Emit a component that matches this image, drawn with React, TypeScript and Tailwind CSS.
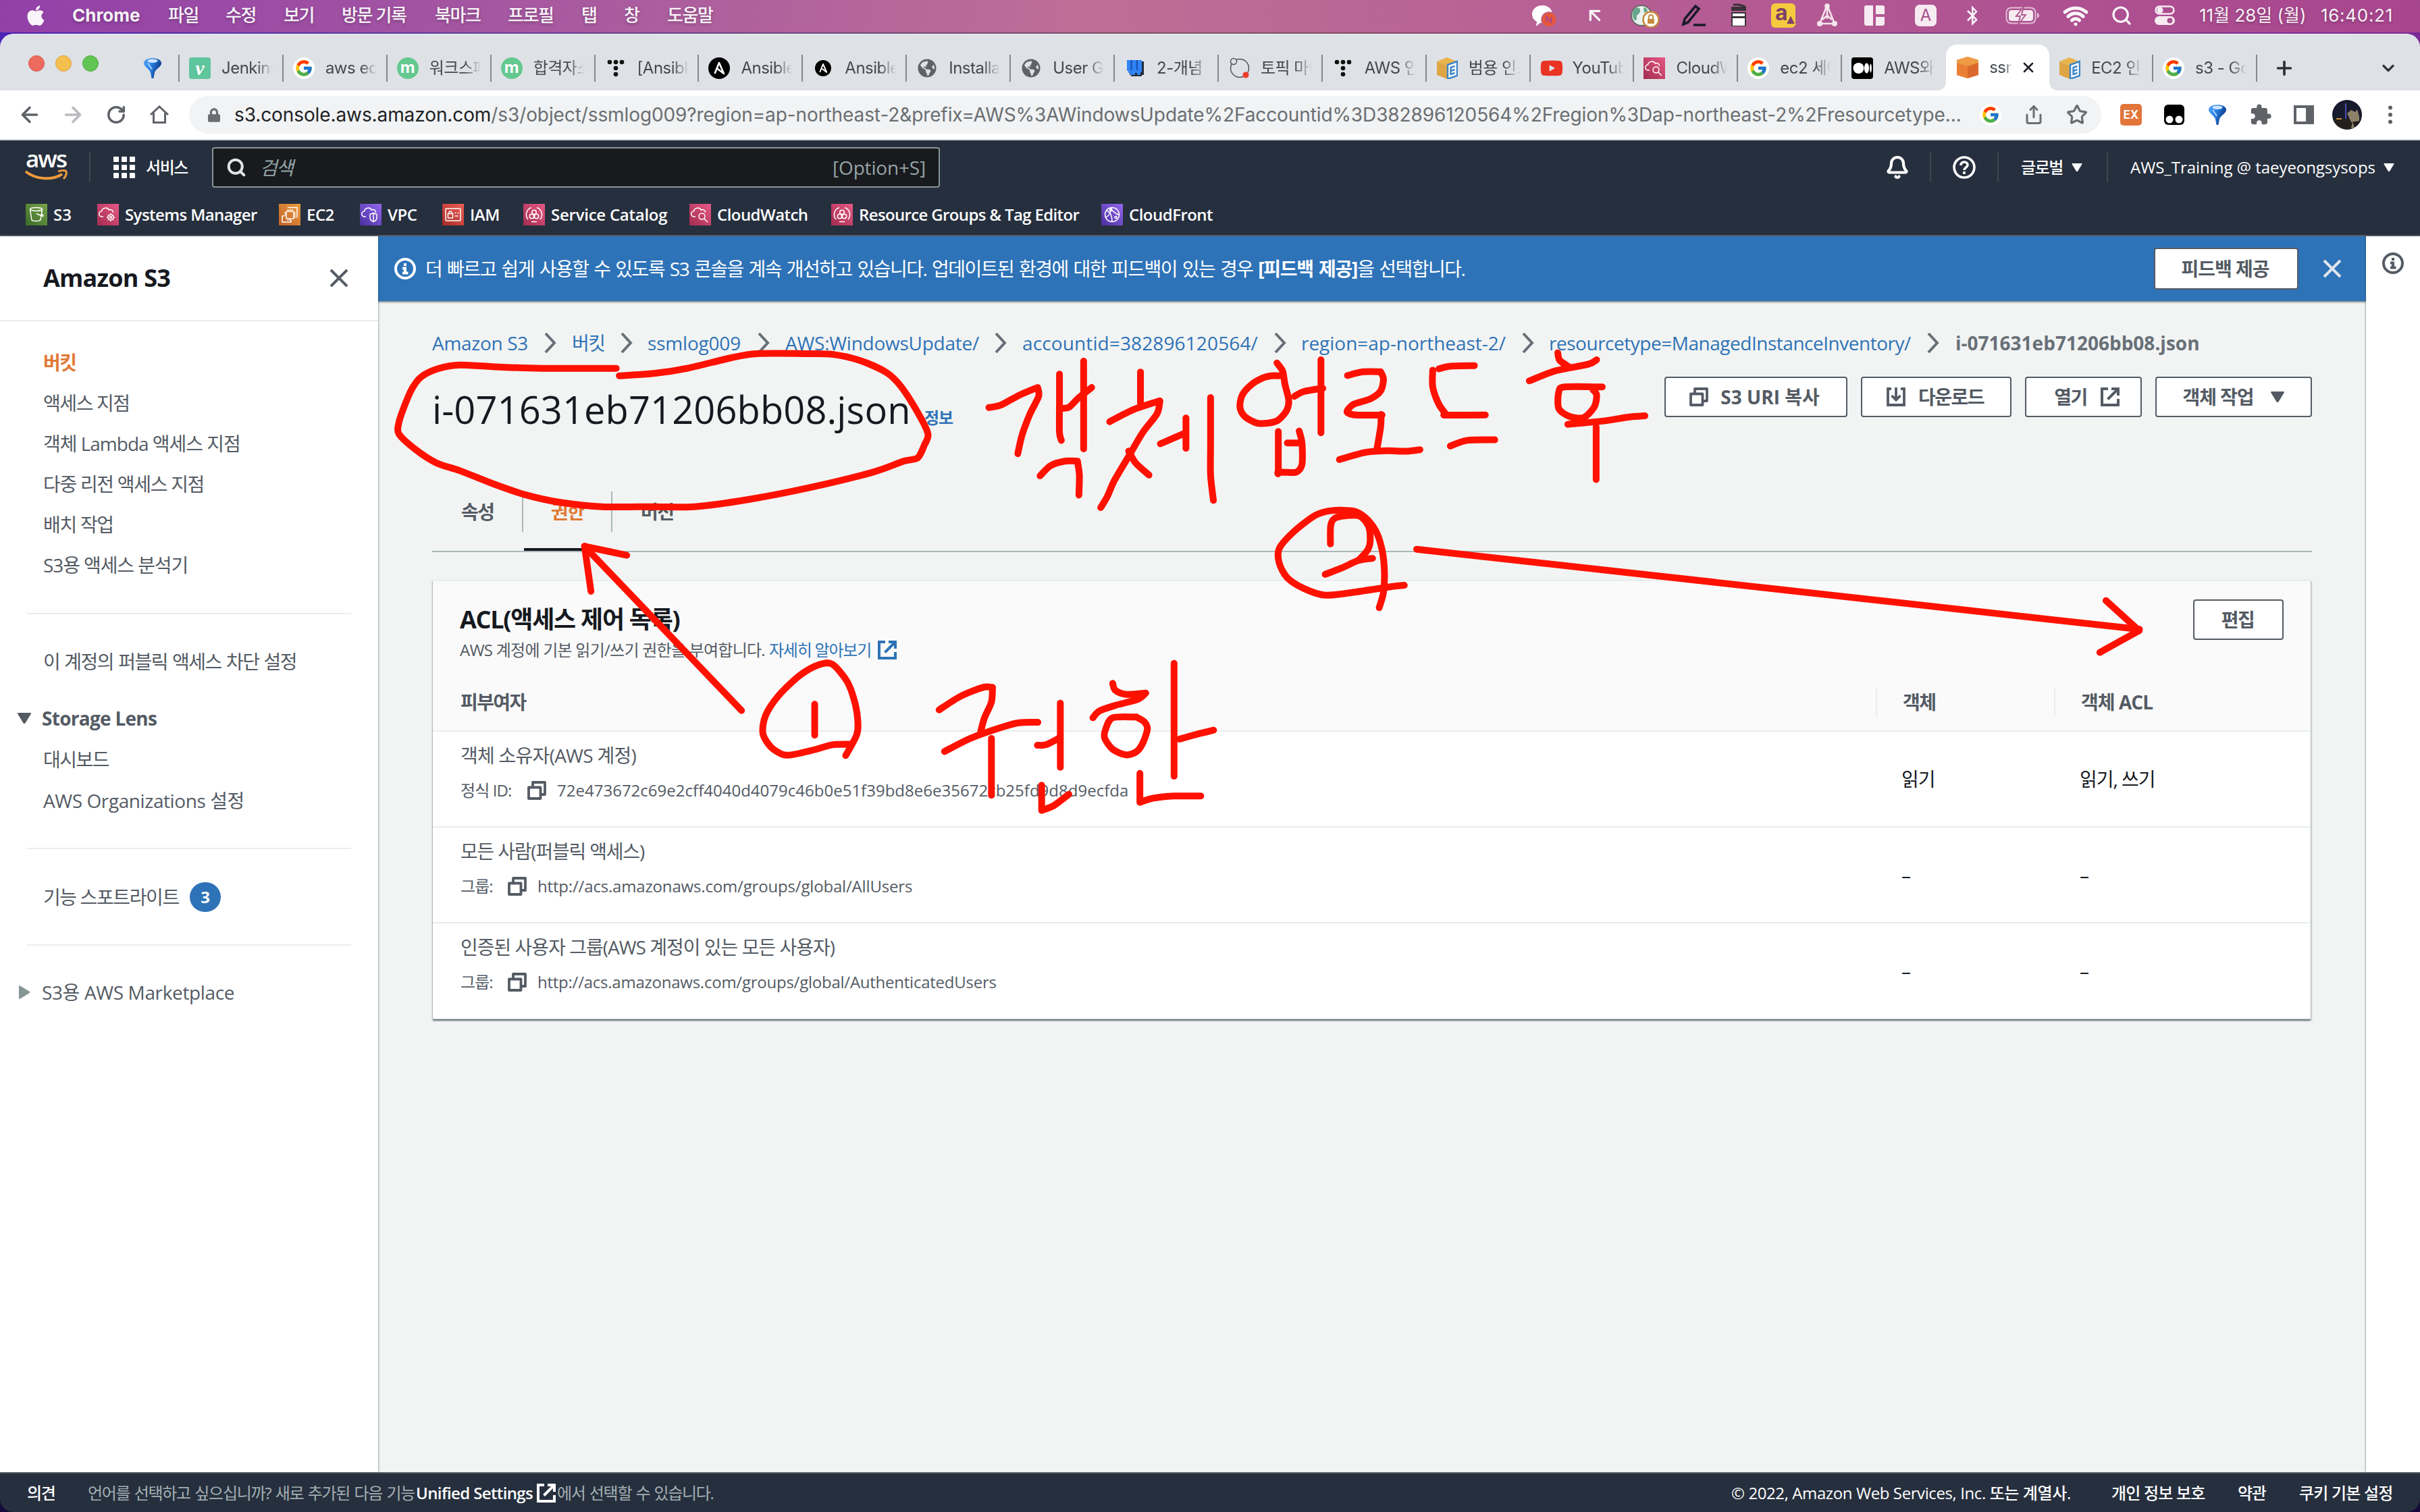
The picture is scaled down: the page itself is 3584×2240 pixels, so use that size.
import type { ReactNode } from 'react'
import { FaApple, FaGlobeAmericas, FaYoutube, FaLock, FaBluetoothB } from 'react-icons/fa'
import { FcGoogle } from 'react-icons/fc'
import { MdExtension } from 'react-icons/md'
import { ArrowLeft, ArrowRight, RotateCw, Share, Star, Search, Wifi, Bell, Plus, X, ChevronDown, ArrowUpLeft } from 'lucide-react'

/* ---------- small icons ---------- */

const Copy = ({ className = '' }: { className?: string }) => (
  <svg viewBox="0 0 28 28" className={`size-7 shrink-0 ${className}`} fill="none" stroke="currentColor" strokeWidth="3.8" strokeLinejoin="round">
    <path d="M2 9.5h17.5V26H2z" />
    <path d="M8 9.5V2h18v18h-6" />
  </svg>
)
const External = ({ className = '' }: { className?: string }) => (
  <svg viewBox="0 0 28 28" className={`size-7 shrink-0 ${className}`} fill="none" stroke="currentColor" strokeWidth="4">
    <path d="M11 2H2v24h24v-9" />
    <path d="M16 2h10v10M25 3 10.500 17.500" />
  </svg>
)
const Download = () => (
  <svg viewBox="0 0 28 28" className="size-7 shrink-0" fill="none" stroke="currentColor" strokeWidth="3.8">
    <path d="M7 2H2v24h24V2h-5" />
    <path d="M14 0v18M7.500 12l6.500 6.500L20.500 12" />
  </svg>
)
const Info = ({ className = '' }: { className?: string }) => (
  <svg viewBox="0 0 32 32" className={`size-8 shrink-0 ${className}`} fill="none" stroke="currentColor" strokeWidth="4">
    <circle cx="16" cy="16" r="14" />
    <path d="M16 8v4M12 15.500h4V22M12 22.500h8.500" />
  </svg>
)
const Tri = ({ className = '' }: { className?: string }) => (
  <svg viewBox="0 0 20 16" className={`shrink-0 ${className}`} fill="currentColor" stroke="currentColor" strokeWidth="2" strokeLinejoin="round">
    <path d="M1 1h18L10.500 15h-1z" />
  </svg>
)
const Cross = ({ className = '' }: { className?: string }) => (
  <svg viewBox="0 0 28 28" className={`size-7 shrink-0 ${className}`} fill="none" stroke="currentColor" strokeWidth="4">
    <path d="M2 2l24 24M26 2 2 26" />
  </svg>
)
const Chevron = () => (
  <svg viewBox="0 0 18 30" className="h-[30px] w-[18px] shrink-0" fill="none" stroke="#687078" strokeWidth="4">
    <path d="M2 1l13 14L2 29" />
  </svg>
)
const Pin = ({ className = '' }: { className?: string }) => (
  <svg viewBox="0 0 30 32" className={className}>
    <defs>
      <linearGradient id="pin" x1="0" y1="0" x2="1" y2=".4">
        <stop offset="0" stopColor="#5aa5f5" />
        <stop offset=".45" stopColor="#2d86ea" />
        <stop offset="1" stopColor="#0a3a86" />
      </linearGradient>
    </defs>
    <path d="M1 8C1-2.500 29-2.500 29 8c0 5-7 8-10.500 14L16.500 32h-3l-2-10C8 16 1 13 1 8z" fill="url(#pin)" />
    <ellipse cx="15" cy="4.500" rx="8" ry="3" fill="#cfe6ff" />
    <path d="M8 8c1 4 4 6 6 10" stroke="#a9d2fb" strokeWidth="2" fill="none" />
  </svg>
)

/* ---------- tab favicons ---------- */

const GoogleFav = () => (
  <span className="grid size-8 place-items-center rounded-full bg-white">
    <FcGoogle className="size-7" />
  </span>
)
const AnsibleFav = ({ small = false }: { small?: boolean }) => (
  <svg viewBox="0 0 32 32" className={small ? 'size-6' : 'size-8'}>
    <circle cx="16" cy="16" r="16" fill="#000" />
    <path d="M9.500 24 16 8l7 16-10.500-8" fill="none" stroke="#fff" strokeWidth="2.600" strokeLinejoin="round" />
  </svg>
)
const DotsT = () => (
  <svg viewBox="0 0 32 32" className="size-8" fill="#111">
    {[[7, 7], [16, 7], [25, 7], [16, 16], [16, 25]].map(([x, y]) => (
      <circle key={`${x}-${y}`} cx={x} cy={y} r="3.300" />
    ))}
  </svg>
)
const MFav = () => <span className="grid size-8 place-items-center rounded-full bg-[#63c98f] pb-[3px] font-['Inter'] text-[24px] leading-none font-bold text-white">m</span>
const CubeDoc = () => (
  <svg viewBox="0 0 32 32" className="size-8">
    <path d="M16 0 30 6 16 12 1 6z" fill="#e9b44c" />
    <path d="M1 6l15 6v20L1 26z" fill="#dfa545" />
    <path d="M17 11 31 6v21l-14 5z" fill="#fff" stroke="#3d86c6" strokeWidth="2.500" />
    <path d="M20.500 15.500l7-2.500M20.500 20.500l7-2.500M20.500 25.500l7-2.500M21.500 15v11" stroke="#3d86c6" strokeWidth="2.400" />
  </svg>
)
const BlueBook = () => (
  <svg viewBox="0 0 32 32" className="size-8">
    <path d="M8 6h21v20h-3v2H10v-2H8z" fill="#222b38" />
    <path d="M4 4h22v18h-2v4h-5v-3h-3v3H9v-3H6v-3H4z" fill="#3184f5" />
    <path d="M10.500 4v15M19 4v15" stroke="#1b55b8" strokeWidth="2.500" />
  </svg>
)
const TopicFav = () => (
  <svg viewBox="0 0 32 32" className="size-8" fill="none" stroke="#555" strokeWidth="1.500">
    <circle cx="17" cy="16" r="13.500" />
    <circle cx="8" cy="6" r="4.500" fill="#dee1e6" />
    <circle cx="26" cy="26" r="4.500" fill="#ee3b2c" stroke="none" />
  </svg>
)
const MediumFav = () => (
  <svg viewBox="0 0 32 32" className="size-8">
    <rect width="32" height="32" rx="4" fill="#000" />
    <circle cx="10.500" cy="16" r="8" fill="#fff" />
    <ellipse cx="22.500" cy="16" rx="3.600" ry="7.500" fill="#fff" />
    <ellipse cx="28.500" cy="16" rx="1.400" ry="6.500" fill="#fff" />
  </svg>
)
const OrangeCube = () => (
  <svg viewBox="0 0 32 32" className="size-8">
    <path d="M16 0 32 5v22l-16 5L0 27V5z" fill="#e0702f" />
    <path d="M16 0 32 5v10l-16 5L0 15V5z" fill="#f09a45" />
    <path d="M16 14v18L0 27V9z" fill="#e98034" />
    <path d="M16 14v18l16-5V9z" fill="#da6a2c" />
  </svg>
)

/* ---------- AWS service tiles ---------- */

const CLOUD = 'M9 19H7a4 4 0 0 1-.5-8 6 6 0 0 1 11-2 4 4 0 0 1 6 4'
const GLYPHS: Record<string, ReactNode> = {
  s3: <><ellipse cx="15.500" cy="8" rx="9" ry="2.500" /><path d="M6.500 8l2.500 16c2 2 11 2 13 0l2.500-16M16 14.500l8 3.500c3 1 3-1-1-3" /></>,
  ssm: <><path d={CLOUD} /><circle cx="20" cy="20" r="4" /><circle cx="20" cy="20" r="1.500" /><path d="M20 14v2M20 24v2M14 20h2M24 20h2M16 16l1.500 1.500M22.500 22.500 24 24M24 16l-1.500 1.500M17.500 22.500 16 24" /></>,
  ec2: <><rect x="11" y="11" width="11" height="11" rx="1" /><path d="M13.500 8v3M16.500 8v3M19.500 8v3M13.500 22v3M16.500 22v3M8 13.500h3M8 16.500h3M22 13.500h3M22 16.500h3M22 19.500h3M13 5.500h14v15M8 18H5v9h13v-3" /></>,
  vpc: <><path d={CLOUD} /><path d="M20 13.500l5 2v5c0 3-2.500 5-5 6-2.500-1-5-3-5-6v-5zM20 14v12" /></>,
  iam: <><rect x="5" y="7" width="22" height="18" rx="1" /><rect x="8.500" y="14.500" width="7" height="6.500" /><path d="M10 14.500V13a2 2 0 0 1 4 0v1.500M18.500 13.500h2M22.500 13.500h2M18.500 18h5" /></>,
  catalog: <><path d="M12 5.500A11 11 0 0 0 7 23M20 5.500A11 11 0 0 1 25 23M12 26.500h8" /><circle cx="16" cy="12.500" r="3.200" /><circle cx="12.500" cy="18.500" r="3.200" /><circle cx="19.500" cy="18.500" r="3.200" /></>,
  watch: <><path d={CLOUD} /><circle cx="18.500" cy="18.500" r="4.500" /><path d="M22 22l5 5" /></>,
  front: <><circle cx="16" cy="16" r="10.500" /><path d="M8 10c5 2 8 6 8 16M13 6c4 5 9 9 13 10M7 20c4-2 7-7 8-14" /><circle cx="14" cy="9" r="1.600" /><circle cx="21.500" cy="20" r="1.600" /></>,
}
const Glyph = ({ name }: { name: string }) => (
  <svg viewBox="0 0 32 32" className="size-8" fill="none" stroke="#fff" strokeWidth="1.500">{GLYPHS[name]}</svg>
)
const SERVICES = [
  { name: 'S3', icon: 's3', tile: 'bg-linear-to-tr from-[#3b6b27] to-[#77a548]', width: 'w-[106px]', track: '' },
  { name: 'Systems Manager', icon: 'ssm', tile: 'bg-linear-to-tr from-[#a32b50] to-[#e65a86]', width: 'w-[269px]', track: 'tracking-[-0.58px]' },
  { name: 'EC2', icon: 'ec2', tile: 'bg-linear-to-tr from-[#c16028] to-[#ec9d3f]', width: 'w-[120px]', track: 'tracking-[-0.5px]' },
  { name: 'VPC', icon: 'vpc', tile: 'bg-linear-to-tr from-[#4a2e9f] to-[#9468ee]', width: 'w-[122px]', track: 'tracking-[-0.5px]' },
  { name: 'IAM', icon: 'iam', tile: 'bg-linear-to-tr from-[#a82a26] to-[#ec5f55]', width: 'w-[120px]', track: 'tracking-[-0.5px]' },
  { name: 'Service Catalog', icon: 'catalog', tile: 'bg-linear-to-tr from-[#a32b50] to-[#e65a86]', width: 'w-[246px]', track: 'tracking-[-0.25px]' },
  { name: 'CloudWatch', icon: 'watch', tile: 'bg-linear-to-tr from-[#a32b50] to-[#e65a86]', width: 'w-[210px]', track: 'tracking-[-0.55px]' },
  { name: 'Resource Groups & Tag Editor', icon: 'catalog', tile: 'bg-linear-to-tr from-[#a32b50] to-[#e65a86]', width: 'w-[400px]', track: 'tracking-[-0.64px]' },
  { name: 'CloudFront', icon: 'front', tile: 'bg-linear-to-tr from-[#4a2e9f] to-[#9468ee]', width: 'w-[180px]', track: 'tracking-[-0.52px]' },
]

/* ---------- macOS menu bar ---------- */

const MENUS = [
  ['파일', 'w-[85px]'], ['수정', 'w-[86px]'], ['보기', 'w-[86px]'], ['방문 기록', 'w-[138px]'], ['북마크', 'w-[108px]'],
  ['프로필', 'w-[109px]'], ['탭', 'w-[63px]'], ['창', 'w-[64px]'], ['도움말', 'w-[90px]'],
]

function MenuBar() {
  return (
    <div className="flex h-12 items-center bg-linear-to-r from-[#9240a8] via-[#be6e96] via-45% to-[#a8458f] pr-10 pb-[2px] pl-10 font-['Inter','Noto_Sans_CJK_KR',sans-serif] text-[26px] leading-[44px] whitespace-nowrap text-white/95 [text-shadow:0_2px_4px_rgb(0_0_0/0.25)]">
      <span className="w-[67px] shrink-0"><FaApple className="-ml-1 size-[34px]" /></span>
      <span className="w-[142px] shrink-0 font-bold">Chrome</span>
      {MENUS.map(([label, width]) => (
        <span key={label} className={`${width} shrink-0 font-medium tracking-[-1.4px]`}>{label}</span>
      ))}
      <svg viewBox="0 0 36 36" className="ml-auto size-9 shrink-0">
        <path d="M16 3C7 3 1 9 1 16c0 5 3 9 7 11l-1 7 6-5c10 1 18-4 18-13C31 9 25 3 16 3z" fill="#fff" />
        <circle cx="26" cy="24" r="11" fill="#e8573a" stroke="#b7658f" strokeWidth="1.500" />
        <path d="M22.500 28v-8l7 8v-8" fill="none" stroke="#a8468a" strokeWidth="2" />
      </svg>
      <ArrowUpLeft className="ml-[42px] size-8 shrink-0" strokeWidth={2.4} />
      <svg viewBox="0 0 44 36" className="ml-[36px] h-9 w-11 shrink-0">
        <circle cx="17" cy="18" r="15" fill="#e9f1ee" stroke="#666" strokeWidth="2" />
        <path d="M7 8c5-3 9-1 8 4s-6 4-5 9-3 5-5 1-2-9 2-14zM20 6c4 0 6 3 6 6l-5 2z" fill="#69a78c" />
        <circle cx="31" cy="24" r="11.500" fill="#fff" stroke="#c58a3c" strokeWidth="2.500" />
        <path d="M26 23h10v7H26z" fill="#c58a3c" />
        <path d="M28 23v-3a3 3 0 0 1 6 0v3" fill="none" stroke="#c58a3c" strokeWidth="2" />
      </svg>
      <svg viewBox="0 0 36 36" className="ml-8 size-9 shrink-0" fill="none" stroke="#1a1a2a" strokeWidth="3.600">
        <path d="M3 31l2-8L21 4l5 4L10 28zM18 32h18" />
      </svg>
      <svg viewBox="0 0 26 36" className="ml-9 h-9 w-[26px] shrink-0">
        <path d="M2 5h22v6H2zM2 13h22v21H2z" fill="#3a3238" />
        <path d="M4 22h18v11H4zM4 15h18v4H4z" fill="#fff" />
        <path d="M5 2h9l9 3" stroke="#3a3238" strokeWidth="3" />
      </svg>
      <span className="ml-[35px] flex size-9 shrink-0 items-center rounded-md bg-[#f6ca3f] pb-2 pl-[6px] text-[32px] leading-[28px] font-bold text-[#7d3f6a] [text-shadow:none]">
        a
        <svg viewBox="0 0 16 16" className="mt-5 -ml-1 size-4 shrink-0"><path d="M8 1l7 14H1z" fill="#7d3f6a" stroke="#f6ca3f" strokeWidth="1.500" /></svg>
      </span>
      <svg viewBox="0 0 32 36" className="ml-[31px] h-9 w-8 shrink-0" fill="none" stroke="#f5e6ef" strokeWidth="2.500">
        <path d="M15 5 5 30h22L17 5M16 4v19M9 24l7-6 7 6" />
        <circle cx="16" cy="4" r="2.500" fill="#f5e6ef" />
        <circle cx="5" cy="30" r="4" fill="#f5e6ef" stroke="none" />
        <circle cx="27" cy="30" r="4" fill="#f5e6ef" stroke="none" />
      </svg>
      <svg viewBox="0 0 30 30" className="ml-[39px] size-[30px] shrink-0" fill="#f7ebf2">
        <path d="M3 0h10v30H3a3 3 0 0 1-3-3V3a3 3 0 0 1 3-3zM17 0h10a3 3 0 0 1 3 3v10H17zM17 17h13v10a3 3 0 0 1-3 3H17z" />
      </svg>
      <span className="ml-[45px] grid size-8 shrink-0 place-items-center rounded-[7px] bg-[#f7ebf2] text-[24px] leading-none text-[#a8508a] [text-shadow:none]">A</span>
      <FaBluetoothB className="ml-[41px] h-[30px] w-6 shrink-0" />
      <svg viewBox="0 0 52 26" className="ml-[37px] h-[26px] w-[52px] shrink-0">
        <rect x="1.500" y="1.500" width="43" height="23" rx="7" fill="none" stroke="#f7ebf2" strokeOpacity=".7" strokeWidth="2" />
        <rect x="5" y="5" width="36" height="16" rx="4" fill="#f7ebf2" />
        <path d="M27 0 16 14h6l-3 12 11-14h-6z" fill="#f7ebf2" stroke="#b15c92" strokeWidth="2" />
        <path d="M47 9c4 1 4 7 0 8z" fill="#f7ebf2" fillOpacity=".7" />
      </svg>
      <Wifi className="ml-[33px] size-[38px] shrink-0" strokeWidth={3.2} />
      <Search className="ml-[33px] size-8 shrink-0" strokeWidth={2.4} />
      <svg viewBox="0 0 30 30" className="ml-[33px] size-[30px] shrink-0">
        <rect x="1.500" y="1.500" width="27" height="11" rx="5.500" fill="none" stroke="#f7ebf2" strokeWidth="2.500" />
        <circle cx="8" cy="7" r="4.500" fill="#f7ebf2" />
        <rect y="16" width="30" height="13" rx="6.500" fill="#f7ebf2" />
        <circle cx="22.500" cy="22.500" r="4" fill="#ac5290" />
      </svg>
      <span className="ml-9 w-[180px] shrink-0">11월 28일 (월)</span>
      <span className="w-[107px] shrink-0 tracking-[0.7px]">16:40:21</span>
    </div>
  )
}

/* ---------- Chrome ---------- */

const TABS: { icon: ReactNode; title: string }[] = [
  { icon: <span className="grid size-8 place-items-center rounded-[4px] bg-[#5fc59d] font-['Liberation_Serif'] text-[30px] leading-[24px] font-bold text-white italic">v</span>, title: 'Jenkins' },
  { icon: <GoogleFav />, title: 'aws ec2' },
  { icon: <MFav />, title: '워크스페' },
  { icon: <MFav />, title: '합격자소' },
  { icon: <DotsT />, title: '[Ansible' },
  { icon: <AnsibleFav />, title: 'Ansible' },
  { icon: <AnsibleFav small />, title: 'Ansible' },
  { icon: <FaGlobeAmericas className="size-7 text-[#5f6368]" />, title: 'Installa' },
  { icon: <FaGlobeAmericas className="size-7 text-[#5f6368]" />, title: 'User Gu' },
  { icon: <BlueBook />, title: '2-개념' },
  { icon: <TopicFav />, title: '토픽 마이' },
  { icon: <DotsT />, title: 'AWS 인' },
  { icon: <CubeDoc />, title: '범용 인스' },
  { icon: <FaYoutube className="size-[34px] text-[#ea3323]" />, title: 'YouTube' },
  { icon: <span className="bg-linear-to-tr from-[#a32b50] to-[#e65a86]"><Glyph name="watch" /></span>, title: 'CloudWa' },
  { icon: <GoogleFav />, title: 'ec2 세이' },
  { icon: <MediumFav />, title: 'AWS와' },
]
const TABS_AFTER = [
  { icon: <CubeDoc />, title: 'EC2 인스' },
  { icon: <GoogleFav />, title: 's3 - Go' },
]

function Tab({ icon, title, last = false }: { icon: ReactNode; title: string; last?: boolean }) {
  return (
    <div className="flex h-[40px] w-[153.9px] shrink-0 items-center">
      <span className="ml-[14px] grid w-8 shrink-0 place-items-center">{icon}</span>
      <span className="ml-[16px] w-[76px] shrink-0 overflow-hidden tracking-[-0.5px] mask-r-from-68% mask-r-to-100%">{title}</span>
      {!last && <span className="ml-auto h-[40px] w-[2px] bg-[#84888c]" />}
    </div>
  )
}

function TabStrip() {
  return (
    <div className="flex h-[84px] items-start rounded-t-[20px] border-t border-[#f3f4f6] bg-[#dee1e6] pt-[15px] font-['Inter','Noto_Sans_CJK_KR',sans-serif] text-[24px] leading-[40px] whitespace-nowrap text-[#45494d]">
      <div className="mt-[15px] flex h-[40px] w-[266px] shrink-0 items-center">
        <span className="mb-[15px] ml-[42px] size-6 rounded-full border border-[#d9594e] bg-[#ec6a5e]" />
        <span className="mb-[15px] ml-4 size-6 rounded-full border border-[#dca33d] bg-[#f4bf4f]" />
        <span className="mb-[15px] ml-4 size-6 rounded-full border border-[#51a83f] bg-[#61c554]" />
        <Pin className="ml-[66px] h-[30px] w-[28px]" />
        <span className="ml-auto h-[40px] w-[2px] bg-[#84888c]" />
      </div>
      <div className="mt-[15px] flex shrink-0">
        {TABS.map((t, i) => <Tab key={i} {...t} last={i === TABS.length - 1} />)}
      </div>
      <div className="relative flex h-[68px] w-[153px] shrink-0 items-center rounded-t-[16px] bg-white">
        <svg viewBox="0 0 14 14" className="absolute bottom-0 -left-[14px] size-[14px]"><path d="M14 0v14H0Q14 14 14 0z" fill="#fff" /></svg>
        <svg viewBox="0 0 14 14" className="absolute -right-[14px] bottom-0 size-[14px]"><path d="M0 0v14h14Q0 14 0 0z" fill="#fff" /></svg>
        <span className="ml-4 shrink-0"><OrangeCube /></span>
        <span className="ml-[16px] w-[34px] overflow-hidden tracking-[-0.5px] mask-r-from-68% mask-r-to-100%">ssml</span>
        <X className="ml-[12px] size-6 text-[#202124]" strokeWidth={2.6} />
      </div>
      <div className="mt-[15px] flex shrink-0">
        {TABS_AFTER.map((t, i) => <Tab key={i} {...t} />)}
      </div>
      <Plus className="mt-[19px] ml-[24px] size-8 shrink-0 text-[#303134]" strokeWidth={2.8} />
      <ChevronDown className="mt-[21px] ml-[124px] size-7 shrink-0 text-[#303134]" strokeWidth={2.8} />
    </div>
  )
}

const Cell = ({ children }: { children: ReactNode }) => <span className="grid w-16 shrink-0 place-items-center">{children}</span>

function Toolbar() {
  return (
    <div className="flex h-[74px] items-center border-b-2 border-[#d5d7da] bg-white pl-3 text-[#5f6368]">
      <Cell><ArrowLeft className="size-[36px]" strokeWidth={2.4} /></Cell>
      <Cell><ArrowRight className="size-[36px] text-[#b9bbbe]" strokeWidth={2.4} /></Cell>
      <Cell><RotateCw className="size-[30px]" strokeWidth={2.8} /></Cell>
      <Cell><svg viewBox="0 0 28 28" className="size-7" fill="none" stroke="currentColor" strokeWidth="3"><path d="M1 14 14 2l13 12M5.500 11v14.500h17V11" /></svg></Cell>
      <div className="ml-3 flex h-14 w-[2832px] shrink-0 items-center rounded-full bg-[#f1f3f4] pr-1 pl-7 font-['Inter','Noto_Sans_CJK_KR',sans-serif] text-[28px] leading-[40px] tracking-[-0.1px] whitespace-nowrap text-[#6a6e72]">
        <FaLock className="mr-[21px] h-[21px] w-[18px] shrink-0" />
        <span className="min-w-0 grow"><span className="text-[#202124]">s3.console.aws.amazon.com</span>/s3/object/ssmlog009?region=ap-northeast-2&amp;prefix=AWS%3AWindowsUpdate%2Faccountid%3D382896120564%2Fregion%3Dap-northeast-2%2Fresourcetype...</span>
        <Cell><GoogleFav /></Cell>
        <Cell><Share className="size-[30px]" strokeWidth={2.4} /></Cell>
        <Cell><Star className="size-[32px]" strokeWidth={2.4} /></Cell>
      </div>
      <span className="w-3 shrink-0" />
      <Cell><span className="grid size-8 place-items-center rounded-[5px] bg-[#e2753a] font-['Inter'] text-[17px] leading-none font-bold text-white">EX</span></Cell>
      <Cell>
        <svg viewBox="0 0 32 32" className="size-8"><rect x="1" y="1" width="30" height="30" rx="6" fill="#000" /><circle cx="9" cy="23" r="5.500" fill="#fff" /><circle cx="23" cy="23" r="5.500" fill="#fff" /></svg>
      </Cell>
      <Cell><Pin className="h-[30px] w-[28px]" /></Cell>
      <Cell><MdExtension className="size-[34px]" /></Cell>
      <Cell><svg viewBox="0 0 30 28" className="h-7 w-[30px]"><path fillRule="evenodd" d="M0 0h30v28H0zM4 4v20h14V4z" fill="#5f6368" /></svg></Cell>
      <Cell>
        <svg viewBox="0 0 44 44" className="size-11">
          <circle cx="22" cy="22" r="22" fill="#17192c" />
          <path d="M20 5v24" stroke="#4a4fb0" strokeWidth="2" />
          <path d="M1 28h42a22 22 0 0 1-42 0z" fill="#24201c" />
          <path d="M22 20l6-5 6 3 3-4 3 10v7l-12 2zM30 32l3 9-5 1z" fill="#8d8168" />
          <path d="M6 27h8v2H6z" fill="#c98b45" />
        </svg>
      </Cell>
      <Cell><svg viewBox="0 0 6 28" className="h-7 w-[6px]" fill="#5f6368"><circle cx="3" cy="3.500" r="3" /><circle cx="3" cy="14" r="3" /><circle cx="3" cy="24.500" r="3" /></svg></Cell>
    </div>
  )
}

/* ---------- AWS console ---------- */

const Sep = ({ className = '' }: { className?: string }) => <span className={`h-11 w-[2px] shrink-0 bg-[#3d4653] ${className}`} />

function AwsHeader() {
  return (
    <header className="h-[142px] border-b-2 border-[#545b64] bg-[#262f3e] text-[24px] leading-[40px] font-medium whitespace-nowrap text-white">
      <div className="flex h-20 items-center">
        <div className="ml-[36px] flex w-[64px] shrink-0 flex-col items-center">
          <span className="h-[23px] text-[35px] leading-[13px] font-semibold tracking-[-2px]">aws</span>
          <svg viewBox="0 0 64 17" className="h-[17px] w-16" fill="none" stroke="#ef9a3c">
            <path d="M2 3c16 13 40 13 54 4" strokeWidth="4" />
            <path d="M50 3c5-2 11-2 12 0s0 7-4 11" strokeWidth="3" />
          </svg>
        </div>
        <Sep className="ml-8" />
        <svg viewBox="0 0 32 32" className="ml-[34px] size-8 shrink-0" fill="#fff">
          {[0, 12, 24].flatMap((y) => [0, 12, 24].map((x) => <rect key={`${x}-${y}`} x={x} y={y} width="8" height="8" rx="1" />))}
        </svg>
        <span className="ml-4 w-[98px] shrink-0 tracking-[-1.4px]">서비스</span>
        <div className="flex h-[60px] w-[1078px] shrink-0 items-center rounded-[4px] border-2 border-[#879596] bg-[#191a1e] pr-[19px] pl-[19px] text-[28px] font-normal text-[#95a5a6]">
          <Search className="size-[30px] text-[#e2e5e5]" strokeWidth={3.2} />
          <span className="ml-[20px] grow tracking-[-1.6px] italic">검색</span>
          <span className="tracking-[-0.17px]">[Option+S]</span>
        </div>
        <Bell className="ml-auto size-9 shrink-0" strokeWidth={2.8} />
        <Sep className="ml-[30px]" />
        <svg viewBox="0 0 34 34" className="ml-8 size-[34px] shrink-0" fill="none" stroke="#fff" strokeWidth="3.600">
          <circle cx="17" cy="17" r="15" />
          <path d="M12 14c0-7 10-6 10-.5 0 3.500-5 3.500-5 7.500M17 23v4" />
        </svg>
        <Sep className="ml-[32px]" />
        <span className="ml-[33px] w-[75px] shrink-0 tracking-[-1.4px]">글로벌</span>
        <Tri className="h-3 w-4" />
        <Sep className="ml-[36px]" />
        <span className="ml-[33px] w-[375px] shrink-0 tracking-[-0.05px]">AWS_Training @ taeyeongsysops</span>
        <Tri className="mr-[38px] h-3 w-4" />
      </div>
      <nav className="flex h-[60px] items-center pl-[38px] font-semibold">
        {SERVICES.map((s) => (
          <div key={s.name} className={`flex shrink-0 items-center gap-[9px] ${s.width}`}>
            <span className={s.tile}><Glyph name={s.icon} /></span>
            <span className={`${s.track} font-[550]`}>{s.name}</span>
          </div>
        ))}
      </nav>
    </header>
  )
}

function Sidebar() {
  const item = 'flex h-[60px] items-center pl-16'
  const rule = 'mx-10 h-[2px] w-[480px] bg-[#eaeded]'
  return (
    <aside className="relative z-10 w-[560px] shrink-0 bg-white text-[28px] leading-[40px] whitespace-nowrap text-[#545b64] shadow-[1px_0_2px_rgb(0_28_36/0.35)]">
      <div className="flex h-[126px] items-center justify-between border-b-2 border-[#eaeded] pr-[44px] pl-16">
        <h2 className="text-[36px] font-bold tracking-[-0.8px] text-[#16191f]">Amazon S3</h2>
        <Cross />
      </div>
      <div className="mt-[31px]">
        <div className={`${item} font-bold tracking-[-1.5px] text-[#e17a36]`}>버킷</div>
        <div className={`${item} tracking-[-1.39px]`}>액세스 지점</div>
        <div className={`${item} tracking-[-1.02px]`}>객체 Lambda 액세스 지점</div>
        <div className={`${item} tracking-[-1.3px]`}>다중 리전 액세스 지점</div>
        <div className={`${item} tracking-[-1.3px]`}>배치 작업</div>
        <div className={`${item} tracking-[-1.1px]`}>S3용 액세스 분석기</div>
      </div>
      <div className={`mt-[41px] ${rule}`} />
      <div className={`mt-[40px] ${item} tracking-[-1.5px] [word-spacing:1.3px]`}>이 계정의 퍼블릭 액세스 차단 설정</div>
      <div className="mt-[24px] flex h-[60px] items-center pl-[26px] font-bold tracking-[-0.72px]">
        <Tri className="mr-4 h-4 w-5" />Storage Lens
      </div>
      <div className={`mt-[1px] ${item} tracking-[-1.5px]`}>대시보드</div>
      <div className={`mt-px ${item} tracking-[-0.42px]`}>AWS Organizations 설정</div>
      <div className={`mt-[40px] ${rule}`} />
      <div className={`mt-[41px] ${item} tracking-[-1.4px]`}>
        <span className="w-[217px]">기능 스포트라이트</span>
        <span className="flex h-11 w-[46px] items-center justify-center rounded-full bg-[#2e73b8] text-[24px] font-bold tracking-normal text-white">3</span>
      </div>
      <div className={`mt-[40px] ${rule}`} />
      <div className="mt-[39px] flex h-[60px] items-center pl-[26px] tracking-[-0.37px]">
        <Tri className="mr-4 h-4 w-5 -rotate-90 text-[#879596]" />S3용 AWS Marketplace
      </div>
    </aside>
  )
}

const Button = ({ className, children }: { className: string; children: ReactNode }) => (
  <button type="button" className={`flex h-[60px] shrink-0 items-center justify-center rounded-[4px] border-2 border-[#545b64] bg-white font-bold ${className}`}>{children}</button>
)

const CRUMBS = [
  { text: 'Amazon S3', cls: 'w-[166px] tracking-[-0.33px]' },
  { text: '버킷', cls: 'ml-[23px] w-[72px] tracking-[-1.6px]' },
  { text: 'ssmlog009', cls: 'ml-[22px] w-[163px] tracking-[-0.2px]' },
  { text: 'AWS:WindowsUpdate/', cls: 'ml-[23px] w-[310px] tracking-[-0.26px]' },
  { text: 'accountid=382896120564/', cls: 'ml-[23px] w-[373px] tracking-[0.12px]' },
  { text: 'region=ap-northeast-2/', cls: 'ml-[22px] w-[327px] tracking-[-0.03px]' },
  { text: 'resourcetype=ManagedInstanceInventory/', cls: 'ml-[22px] w-[560px] tracking-[-0.48px]' },
]

const ROWS = [
  { who: '객체 소유자(AWS 계정)', wt: 'tracking-[-0.74px]', label: '정식 ID:', lw: 'w-[99px]', id: '72e473672c69e2cff4040d4079c46b0e51f39bd8e6e35672cb25fd9d8d9ecfda', it: 'tracking-[0.01px]', obj: '읽기', acl: '읽기, 쓰기' },
  { who: '모든 사람(퍼블릭 액세스)', wt: 'tracking-[-1.19px]', label: '그룹:', lw: 'w-[70px]', id: 'http://acs.amazonaws.com/groups/global/AllUsers', it: 'tracking-[-0.17px]', obj: '–', acl: '–' },
  { who: '인증된 사용자 그룹(AWS 계정이 있는 모든 사용자)', wt: 'tracking-[-0.99px]', label: '그룹:', lw: 'w-[70px]', id: 'http://acs.amazonaws.com/groups/global/AuthenticatedUsers', it: 'tracking-[-0.24px]', obj: '–', acl: '–' },
]

function AclPanel() {
  const grid = 'grid grid-cols-[2137px_264px_1fr] items-center'
  return (
    <section className="mt-[41px] mr-[82px] ml-[81px] bg-white shadow-[0_2px_2px_rgb(0_28_36/0.5),2px_2px_2px_rgb(0_28_36/0.12),-1px_2px_2px_rgb(0_28_36/0.15)]">
      <div className="h-[225px] border-t-2 border-b-2 border-[#eaeded] bg-[#fafafa]">
        <div className="flex h-[136px] items-start justify-between pr-10 pl-[40px]">
          <div className="pt-[33px]">
            <h2 className="h-12 text-[36px] leading-[48px] font-bold tracking-[-1.25px] text-[#16191f]">ACL(액세스 제어 목록)</h2>
            <p className="mt-[3px] flex h-9 items-center text-[24px]">
              <span className="w-[458px] tracking-[-0.75px]">AWS 계정에 기본 읽기/쓰기 권한을 부여합니다.</span>
              <span className="w-[161px] tracking-[-1.22px] text-[#2f73b7]">자세히 알아보기</span>
              <External className="text-[#2f73b7]" />
            </p>
          </div>
          <Button className="mt-[27px] w-[134px] pr-[2px] tracking-[-1.4px]">편집</Button>
        </div>
        <div className={`${grid} h-[85px] font-bold`}>
          <span className="pl-[41px] tracking-[-1.6px]">피부여자</span>
          <span className="h-[42px] border-l-2 border-[#eaeded] pl-[38px] leading-[42px] tracking-[-1.4px]">객체</span>
          <span className="h-[42px] border-l-2 border-[#eaeded] pl-[38px] leading-[42px] tracking-[-0.96px]">객체 ACL</span>
        </div>
      </div>
      {ROWS.map((r) => (
        <div key={r.id} className={`${grid} h-[142px] border-b-2 border-[#eaeded]`}>
          <div className="self-start pt-[15px] pl-[41px]">
            <div className={`h-10 ${r.wt}`}>{r.who}</div>
            <div className="mt-[14px] flex h-9 items-center text-[24px] leading-9">
              <span className={`${r.lw} shrink-0 tracking-[-0.9px]`}>{r.label}</span>
              <Copy className="mr-4" />
              <span className={r.it}>{r.id}</span>
            </div>
          </div>
          <span className="pl-[38px] tracking-[-1px] text-[#16191f]">{r.obj}</span>
          <span className="pl-[38px] tracking-[-1px] text-[#16191f]">{r.acl}</span>
        </div>
      ))}
    </section>
  )
}

function Main() {
  return (
    <main className="w-[2944px] shrink-0 bg-[#f2f4f3] text-[28px] leading-[40px] whitespace-nowrap text-[#545b64]">
      <div className="flex h-[96px] items-center bg-[#2e73b8] pr-9 pl-6 text-white shadow-[0_2px_2px_rgb(0_28_36/0.45)]">
        <Info />
        <span className="ml-[14px] tracking-[-1.51px] [word-spacing:2px]">더 빠르고 쉽게 사용할 수 있도록 S3 콘솔을 계속 개선하고 있습니다. 업데이트된 환경에 대한 피드백이 있는 경우 <b className="tracking-[-1.2px]">[피드백 제공]</b>을 선택합니다.</span>
        <Button className="ml-auto h-[62px] w-[214px] pr-[3px] tracking-[-1px] text-[#545b64]">피드백 제공</Button>
        <Cross className="ml-9 text-[#dfe6ec]" />
      </div>

      <nav className="mt-8 flex h-[60px] items-center pl-20 text-[#2f73b7]">
        {CRUMBS.map((c) => (
          <div key={c.text} className="flex items-center">
            <span className={`shrink-0 ${c.cls}`}>{c.text}</span>
            <Chevron />
          </div>
        ))}
        <b className="ml-[24px] text-[#687078]">i-071631eb71206bb08.json</b>
      </nav>

      <div className="flex h-[190px] items-start pr-20 pl-20">
        <h1 className="mt-[28px] w-[729px] shrink-0 text-[56px] leading-[80px] font-[430] tracking-[0.1px] text-[#16191f]">i-071631eb71206bb08.json</h1>
        <span className="mt-[61px] text-[24px] font-bold tracking-[-1.2px] text-[#2f73b7]">정보</span>
        <div className="mt-[20px] ml-auto flex">
          <Button className="w-[271px] gap-[18px] pr-[4px]"><Copy />S3 URI 복사</Button>
          <Button className="ml-5 w-[223px] gap-[19px] pr-[3px] tracking-[-1.5px]"><Download />다운로드</Button>
          <Button className="ml-5 w-[173px] gap-[20px] pl-[10px] tracking-[-1.5px]">열기<External /></Button>
          <Button className="ml-5 w-[232px] gap-[26px] tracking-[-1.07px]">객체 작업<Tri className="h-4 w-5" /></Button>
        </div>
      </div>

      <div className="mr-20 ml-20 flex h-[90px] items-start border-b-2 border-[#aab7b8] font-bold tracking-[-1.4px]">
        <span className="h-[60px] w-[135px] border-r-2 border-[#aab7b8] pl-[43px] leading-[60px]">속성</span>
        <span className="relative h-[60px] w-[132px] border-r-2 border-[#aab7b8] pl-[41px] leading-[60px] text-[#e17a36]">
          권한
          <span className="absolute top-[84px] left-[1px] h-[4px] w-[129px] bg-[#16191f]" />
        </span>
        <span className="h-[60px] pl-[42px] leading-[60px]">버전</span>
      </div>

      <AclPanel />
    </main>
  )
}

function Footer() {
  return (
    <footer className="flex h-[59px] items-center rounded-b-[20px] border-t-2 border-[#545b64] bg-[#262f3e] pr-[38px] pl-10 text-[24px] leading-[40px] whitespace-nowrap text-white">
      <span className="w-[90px] shrink-0 font-medium tracking-[-1.4px]">의견</span>
      <span className="tracking-[-1.3px] text-[#a3b0b2] [word-spacing:1.5px]">언어를 선택하고 싶으십니까? 새로 추가된 다음 기능</span>
      <span className="ml-[2px] font-semibold tracking-[-0.63px]">Unified Settings</span>
      <External className="ml-[6px]" />
      <span className="ml-[2px] tracking-[-1.3px] text-[#a3b0b2] [word-spacing:1.3px]">에서 선택할 수 있습니다.</span>
      <span className="ml-auto w-[563px] font-medium tracking-[-0.4px]">© 2022, Amazon Web Services, Inc. 또는 계열사.</span>
      <span className="w-[187px] font-medium tracking-[-0.8px]">개인 정보 보호</span>
      <span className="w-[91px] font-medium tracking-[-1.4px]">약관</span>
      <span className="w-[141px] font-medium tracking-[-0.8px]">쿠키 기본 설정</span>
    </footer>
  )
}

/* ---------- freehand annotations ---------- */

type Stroke = number[]
/* Each group is sketched on its own grid: origin (ox, oy) and units per pixel (sx, sy). */
const INK: { ox: number; oy: number; sx: number; sy: number; strokes: Stroke[] }[] = [
  {
    ox: 560, oy: 340, sx: 1.568, sy: 3,
    strokes: [
      [553, 617, 380, 617, 280, 611, 190, 602, 140, 618, 100, 655, 78, 710, 58, 800, 48, 860, 48, 908, 85, 975, 135, 1037, 190, 1072, 260, 1125, 340, 1178, 420, 1212, 520, 1232, 640, 1232, 735, 1232, 860, 1200, 1000, 1148, 1150, 1078, 1220, 1030, 1253, 1015, 1268, 960, 1277, 910, 1258, 830, 1215, 700, 1180, 635, 1120, 583, 1060, 556, 1000, 552, 880, 552, 820, 570, 720, 616, 640, 640, 560, 650],
    ],
  },
  {
    ox: 1440, oy: 340, sx: 1.4255, sy: 2.529,
    strokes: [
      [35, 667, 60, 658, 100, 620, 138, 592, 138, 592, 140, 625, 122, 690, 105, 770, 96, 840],
      [184, 542, 184, 650, 184, 760, 188, 790],
      [235, 493, 235, 822],
      [193, 670, 205, 665, 225, 630, 252, 592],
      [143, 923, 165, 885, 195, 868, 222, 868, 222, 868, 226, 920, 225, 995],
      [355, 534, 355, 650],
      [290, 720, 340, 675, 396, 642, 396, 642, 390, 690, 360, 760, 330, 850, 300, 940, 285, 1000, 271, 1042],
      [330, 830, 345, 875, 373, 920],
      [397, 803, 450, 762],
      [451, 706, 451, 820],
      [503, 630, 503, 800, 503, 920, 509, 1015],
      [643, 500, 655, 530, 660, 580, 668, 640, 663, 680, 645, 715, 625, 725, 600, 725, 575, 700, 565, 665, 570, 620, 590, 580, 615, 555, 632, 548, 648, 548],
      [680, 625, 700, 607, 740, 595],
      [736, 488, 736, 762],
      [646, 757, 646, 905, 646, 908, 665, 910, 685, 908, 696, 880, 696, 800, 690, 755],
      [665, 800, 695, 800],
      [792, 547, 825, 533, 862, 533, 862, 533, 868, 560, 862, 605, 840, 635, 805, 655, 791, 683, 810, 695, 865, 695],
      [863, 693, 862, 740, 854, 825],
      [775, 862, 830, 835, 875, 829, 915, 831, 945, 825],
      [985, 522, 1010, 512, 1060, 510],
      [972, 527, 972, 590, 985, 655, 1000, 692, 1000, 695, 1083, 695],
      [1009, 811, 1045, 790, 1103, 788],
      [1236, 462, 1240, 490, 1260, 515],
      [1176, 567, 1230, 530, 1300, 505, 1318, 488],
      [1330, 590, 1250, 590, 1238, 610, 1238, 670, 1260, 700, 1290, 705, 1313, 665, 1318, 620, 1310, 600],
      [1257, 730, 1330, 718, 1385, 703, 1420, 698],
      [1317, 740, 1317, 937],
      [912, 1333, 885, 1338, 810, 1358, 745, 1370, 700, 1345, 665, 1305, 648, 1250, 648, 1195, 680, 1130, 725, 1070, 760, 1053, 805, 1055, 830, 1080, 852, 1130, 865, 1200, 870, 1280, 868, 1360, 859, 1417],
      [756, 1178, 757, 1105, 770, 1078, 815, 1072, 836, 1110, 840, 1165, 835, 1200, 815, 1240],
      [845, 1232, 815, 1240, 780, 1268, 745, 1292],
      [938, 1198, 2464, 1498],
    ],
  },
  { ox: 2400, oy: 340, sx: 1.3243, sy: 2.45, strokes: [[952, 1347, 1017, 1456], [1017, 1456, 940, 1535]] },
  {
    ox: 600, oy: 780, sx: 1.2645, sy: 3,
    strokes: [
      [630, 818, 336, 88],
      [415, 128, 336, 88],
      [348, 288, 336, 88],
      [825, 1018, 845, 930, 848, 880, 843, 790, 828, 690, 800, 612, 775, 614, 740, 660, 700, 750, 675, 840, 670, 920, 685, 980, 708, 1014, 728, 1013, 770, 990, 800, 970, 835, 967],
      [767, 790, 767, 928],
      [1000, 815, 1040, 755, 1082, 715, 1100, 715, 1100, 715, 1098, 780, 1085, 850, 1078, 910],
      [1010, 1000, 1060, 940, 1120, 890, 1150, 872, 1185, 870],
      [1098, 942, 1098, 1195],
      [1227, 785, 1227, 1070],
      [1184, 972, 1200, 970, 1225, 940],
      [1192, 1150, 1192, 1262, 1192, 1262, 1215, 1240, 1243, 1190],
      [1325, 697, 1330, 728, 1350, 746, 1387, 740, 1387, 740, 1372, 768, 1330, 795, 1300, 820, 1288, 850],
      [1370, 847, 1325, 850, 1312, 900, 1310, 940, 1325, 990, 1350, 1015, 1370, 1000, 1382, 960, 1390, 900, 1385, 870, 1372, 850],
      [1440, 608, 1440, 1110],
      [1450, 945, 1480, 925, 1514, 905],
      [1376, 1097, 1376, 1226, 1376, 1226, 1400, 1208, 1440, 1198, 1490, 1198],
    ],
  },
]

function smoothPath(s: Stroke, g: { ox: number; oy: number; sx: number; sy: number }) {
  const p: [number, number][] = []
  for (let i = 0; i < s.length; i += 2) p.push([g.ox + s[i] / g.sx, g.oy + s[i + 1] / g.sy])
  let d = `M${p[0][0]} ${p[0][1]}`
  for (let i = 0; i < p.length - 1; i++) {
    const [a, b, c, e] = [p[i - 1] ?? p[i], p[i], p[i + 1], p[i + 2] ?? p[i + 1]]
    if (b[0] === c[0] && b[1] === c[1]) continue
    d += `C${b[0] + (c[0] - a[0]) / 7} ${b[1] + (c[1] - a[1]) / 7} ${c[0] - (e[0] - b[0]) / 7} ${c[1] - (e[1] - b[1]) / 7} ${c[0]} ${c[1]}`
  }
  return d
}

function Annotations() {
  return (
    <svg viewBox="0 0 3584 2240" className="pointer-events-none absolute inset-0 z-20 h-[2240px] w-[3584px]" fill="none" stroke="#ff1100" strokeWidth="10" strokeLinecap="round" strokeLinejoin="round">
      {INK.flatMap((g, gi) => g.strokes.map((s, i) => <path key={`${gi}-${i}`} d={smoothPath(s, g)} />))}
    </svg>
  )
}

export default function App() {
  return (
    <div className="relative flex h-[2240px] w-[3584px] flex-col overflow-hidden bg-[#150a3a] font-['Open_Sans','Noto_Sans_CJK_KR',sans-serif]">
      <MenuBar />
      <div className="bg-linear-to-r from-[#4a22b5] via-[#7d5060] to-[#7a2a98] pt-[2px]">
        <TabStrip />
      </div>
      <Toolbar />
      <AwsHeader />
      <div className="flex h-[1831px] shrink-0 bg-[#f2f4f3]">
        <Sidebar />
        <Main />
        <aside className="relative z-10 flex w-20 shrink-0 justify-center bg-white pt-6 text-[#545b64] shadow-[-1px_0_2px_rgb(0_28_36/0.35)]">
          <Info />
        </aside>
      </div>
      <Footer />
      <Annotations />
    </div>
  )
}
